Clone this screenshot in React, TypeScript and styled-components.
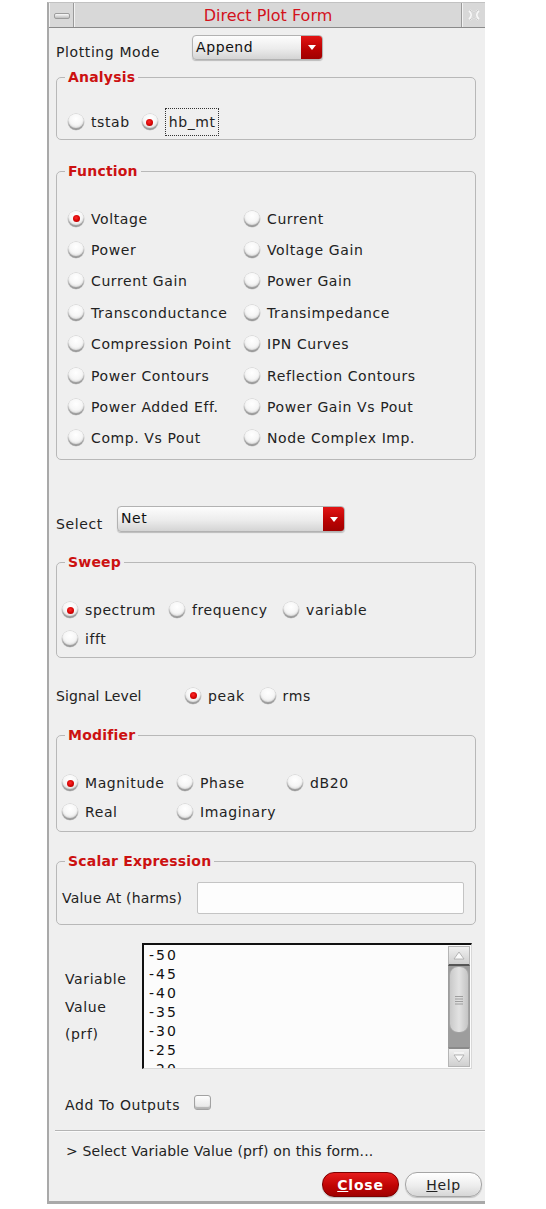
import React from 'react';
import styled, { createGlobalStyle } from 'styled-components';

const GlobalStyle = createGlobalStyle`
  html, body {
    margin: 0;
    padding: 0;
    background: #ffffff;
  }
  body {
    font-family: "DejaVu Sans", "Liberation Sans", sans-serif;
    font-size: 14px;
    color: #222;
    letter-spacing: 0.6px;
  }
`;

const Window = styled.div`
  box-sizing: border-box;
  width: 438px;
  margin: 2px 0 0 47px;
  background: #efefef;
  border-left: 2px solid #a9a9a9;
  border-bottom: 3px solid #a9a9a9;
  border-top: 1px solid #c2c2c2;
`;

const TitleBar = styled.div`
  display: flex;
  height: 25px;
  box-sizing: border-box;
  border-bottom: 1px solid #8a8a8a;
  background: #9a9a9a;
  gap: 1px;
`;

const TitleButton = styled.div<{ $w: number }>`
  width: ${(p) => p.$w}px;
  display: flex;
  align-items: center;
  justify-content: center;
  background: #d8d8d8;
  border-left: 1px solid #f2f2f2;
`;

const TitleText = styled.div`
  flex: 1;
  display: flex;
  align-items: center;
  justify-content: center;
  background: #d8d8d8;
  border-left: 1px solid #f2f2f2;
  color: #d3121c;
  font-size: 16px;
  letter-spacing: 0;
`;

const MinBar = styled.span`
  width: 14px;
  height: 4px;
  margin-top: 2px;
  border-radius: 2px;
  border: 1px solid #9c9c9c;
  background: linear-gradient(#fafafa, #bdbdbd);
`;

const Content = styled.div`
  padding: 0 9px 4px 7px;
`;

const FieldRow = styled.div<{ $mt: number }>`
  display: flex;
  align-items: flex-start;
  margin-top: ${(p) => p.$mt}px;
`;

const RowLabel = styled.div<{ $w: number; $pt: number; $ls?: number }>`
  width: ${(p) => p.$w}px;
  padding-top: ${(p) => p.$pt}px;
  line-height: 17px;
  flex-shrink: 0;
  letter-spacing: ${(p) => p.$ls ?? 0.6}px;
`;

const Combo = styled.div<{ $w: number; $h: number }>`
  box-sizing: border-box;
  width: ${(p) => p.$w}px;
  height: ${(p) => p.$h}px;
  display: flex;
  border: 1px solid #b2b2b2;
  border-radius: 4px;
  overflow: hidden;
  background: linear-gradient(#fdfdfd, #ececec 55%, #d4d4d4);
  box-shadow: 0 1px 1px rgba(0, 0, 0, 0.22);
`;

const ComboText = styled.span`
  flex: 1;
  padding: 0 0 2px 3px;
  display: flex;
  align-items: center;
  color: #111;
`;

const ComboArrow = styled.span`
  width: 21px;
  display: flex;
  align-items: center;
  justify-content: center;
  background: linear-gradient(#e21414, #b80202 60%, #a00000);
  &::after {
    content: '';
    border-left: 4px solid transparent;
    border-right: 4px solid transparent;
    border-top: 5px solid #fff;
  }
`;

const Group = styled.fieldset<{ $mt: number }>`
  margin: ${(p) => p.$mt}px 0 0;
  padding: 0;
  min-width: 0;
  border: 1px solid #b8b8b8;
  border-radius: 5px;
`;

const Legend = styled.legend`
  margin-left: 8px;
  padding: 0 3px;
  font-size: 14px;
  line-height: 17px;
  font-weight: bold;
  letter-spacing: 0.2px;
  color: #cc1111;
`;

const GroupBody = styled.div<{ $pt: number; $pb: number; $pl: number }>`
  padding: ${(p) => p.$pt}px 10px ${(p) => p.$pb}px ${(p) => p.$pl}px;
`;

const OptionGrid = styled.div<{ $cols: string; $row: number }>`
  display: grid;
  grid-template-columns: ${(p) => p.$cols};
  grid-auto-rows: ${(p) => p.$row}px;
  align-items: center;
`;

const OptionLine = styled.div`
  display: flex;
  align-items: center;
  height: 20px;
`;

const Option = styled.label<{ $mr?: number }>`
  display: flex;
  align-items: center;
  white-space: nowrap;
  margin-right: ${(p) => p.$mr ?? 0}px;
`;

const RadioDot = styled.span<{ $on?: boolean }>`
  box-sizing: border-box;
  width: 16px;
  height: 16px;
  margin-right: 7px;
  border-radius: 50%;
  flex-shrink: 0;
  display: flex;
  align-items: center;
  justify-content: center;
  background: radial-gradient(circle at 50% 30%, #ffffff 0%, #f6f6f6 45%, #dcdcdc 75%, #a8a8a8 100%);
  box-shadow: inset 0 -2px 1px rgba(70, 70, 70, 0.45), 0 0 0 0.5px #c8c8c8;
  &::after {
    content: '';
    display: ${(p) => (p.$on ? 'block' : 'none')};
    width: 7px;
    height: 7px;
    border-radius: 50%;
    background: radial-gradient(circle at 45% 40%, #ff2a2a, #d00000 60%, #8a0000);
  }
`;

const FocusBox = styled.span`
  border: 1px dotted #333;
  padding: 5px 2px 5px 3px;
`;

const TextInput = styled.div`
  box-sizing: border-box;
  flex: 1;
  height: 32px;
  background: #fdfdfd;
  border: 1px solid #c4c4c4;
  border-radius: 2px;
`;

const ScalarRow = styled.div`
  display: flex;
  align-items: center;
  padding: 12px 11px 10px 5px;
`;

const ScalarLabel = styled.div`
  width: 135px;
  letter-spacing: 0.2px;
`;

const ListArea = styled.div`
  display: flex;
  margin-top: 18px;
`;

const ListLabels = styled.div`
  width: 77px;
  padding: 23px 0 0 9px;
  line-height: 27.5px;
`;

const ListBox = styled.div`
  box-sizing: border-box;
  width: 330px;
  height: 126px;
  display: flex;
  background: #fcfcfc;
  border-top: 2px solid #111;
  border-left: 2px solid #111;
  border-right: 1px solid #d8d8d8;
  border-bottom: 1px solid #d8d8d8;
  overflow: hidden;
`;

const ListItems = styled.div`
  flex: 1;
  padding: 1px 0 0 5px;
  overflow: hidden;
`;

const ListItem = styled.div`
  height: 19px;
  line-height: 19px;
  letter-spacing: 2px;
  color: #111;
`;

const ScrollBar = styled.div`
  width: 22px;
  margin: 1px 1px 1px 0;
  display: flex;
  flex-direction: column;
  background: #9d9d9d;
`;

const ScrollArrow = styled.div<{ $down?: boolean }>`
  height: 20px;
  display: flex;
  flex-direction: column;
  align-items: center;
  justify-content: center;
  background: linear-gradient(#f0f0f0, #cfcfcf);
  border: 1px solid #b5b5b5;
  box-sizing: border-box;
  ${(p) => (p.$down ? 'border-top: 2px solid #8a8a8a;' : 'border-bottom: 2px solid #555;')}
`;

const ScrollThumb = styled.div`
  height: 67px;
  margin: 0 1px;
  border-radius: 9px;
  background: linear-gradient(90deg, #c9c9c9, #e2e2e2 50%, #c4c4c4);
  border: 1px solid #a4a4a4;
  box-sizing: border-box;
  display: flex;
  align-items: center;
  justify-content: center;
`;

const ScrollTrack = styled.div`
  flex: 1;
`;

const CheckRow = styled.div`
  display: flex;
  align-items: center;
  height: 20px;
  margin-top: 26px;
  padding-left: 9px;
`;

const CheckBox = styled.span`
  box-sizing: border-box;
  width: 17px;
  height: 15px;
  margin-left: 14px;
  margin-top: -6px;
  border-radius: 3px;
  border: 1px solid #a2a2a2;
  background: linear-gradient(#fdfdfd, #e4e4e4);
  box-shadow: inset 0 -2px 1px rgba(90, 90, 90, 0.35);
`;

const Separator = styled.div`
  margin: 15px -9px 0 -1px;
  height: 1px;
  background: #b4b4b4;
  border-bottom: 1px solid #fafafa;
`;

const Hint = styled.div`
  margin-top: 9px;
  padding-left: 10px;
  line-height: 20px;
  letter-spacing: 0.15px;
`;

const ButtonRow = styled.div`
  display: flex;
  justify-content: flex-end;
  gap: 6px;
  margin: 11px -6px 0 0;
`;

const PillButton = styled.div<{ $primary?: boolean }>`
  box-sizing: border-box;
  width: 77px;
  height: 25px;
  border-radius: 12px;
  display: flex;
  align-items: center;
  justify-content: center;
  font-size: 14px;
  font-weight: ${(p) => (p.$primary ? 'bold' : 'normal')};
  letter-spacing: ${(p) => (p.$primary ? '0.8px' : '0.6px')};
  color: ${(p) => (p.$primary ? '#ffffff' : '#222')};
  border: 1px solid ${(p) => (p.$primary ? '#7c0000' : '#a5a5a5')};
  background: ${(p) =>
    p.$primary
      ? 'linear-gradient(#e61c1c, #c00404 55%, #a00000)'
      : 'linear-gradient(#ffffff, #ededed 55%, #d6d6d6)'};
  box-shadow: 0 1px 1px rgba(0, 0, 0, 0.2);
`;

type Opt = { label: string; on?: boolean; focus?: boolean };

const Radio: React.FC<Opt & { mr?: number }> = ({ label, on, focus, mr }) => (
  <Option $mr={mr}>
    <RadioDot $on={on} />
    {focus ? <FocusBox>{label}</FocusBox> : label}
  </Option>
);

const functions: Opt[] = [
  { label: 'Voltage', on: true },
  { label: 'Current' },
  { label: 'Power' },
  { label: 'Voltage Gain' },
  { label: 'Current Gain' },
  { label: 'Power Gain' },
  { label: 'Transconductance' },
  { label: 'Transimpedance' },
  { label: 'Compression Point' },
  { label: 'IPN Curves' },
  { label: 'Power Contours' },
  { label: 'Reflection Contours' },
  { label: 'Power Added Eff.' },
  { label: 'Power Gain Vs Pout' },
  { label: 'Comp. Vs Pout' },
  { label: 'Node Complex Imp.' },
];

const sweeps: Opt[] = [
  { label: 'spectrum', on: true },
  { label: 'frequency' },
  { label: 'variable' },
  { label: 'ifft' },
];

const modifiers: Opt[] = [
  { label: 'Magnitude', on: true },
  { label: 'Phase' },
  { label: 'dB20' },
  { label: 'Real' },
  { label: 'Imaginary' },
];

const values = ['-50', '-45', '-40', '-35', '-30', '-25', '-20'];

const CloseGlyph = () => (
  <svg width="14" height="14" viewBox="0 0 14 14">
    <path d="M3 2 C6 5 8 5 11 2 M3 12 C6 9 8 9 11 12 M2 3 C5 6 5 8 2 11 M12 3 C9 6 9 8 12 11" fill="none" stroke="#f7f7f7" strokeWidth="1.6" />
    <path d="M3 2 C6 5 8 5 11 2 M3 12 C6 9 8 9 11 12" fill="none" stroke="#b9b9b9" strokeWidth="0.8" />
  </svg>
);

const UpArrow = () => (
  <svg width="12" height="9" viewBox="0 0 12 9">
    <path d="M6 1 L11 8 L1 8 Z" fill="#fbfbfb" stroke="#a8a8a8" strokeWidth="0.8" />
  </svg>
);

const DownArrow = () => (
  <svg width="12" height="11" viewBox="0 0 12 11">
    <path d="M1 1 L11 1" stroke="#fbfbfb" strokeWidth="1.2" />
    <path d="M1 3 L11 3 L6 10 Z" fill="#fbfbfb" stroke="#a8a8a8" strokeWidth="0.8" />
  </svg>
);

const Grip = () => (
  <svg width="8" height="10" viewBox="0 0 8 10">
    <path d="M0 1.5 H8 M0 4 H8 M0 6.5 H8 M0 9 H8" stroke="#8e8e8e" strokeWidth="0.8" />
  </svg>
);

export default function App() {
  return (
    <>
      <GlobalStyle />
      <Window>
        <TitleBar>
          <TitleButton $w={23}>
            <MinBar />
          </TitleButton>
          <TitleText>Direct Plot Form</TitleText>
          <TitleButton $w={22}>
            <CloseGlyph />
          </TitleButton>
        </TitleBar>

        <Content>
          <FieldRow $mt={7}>
            <RowLabel $w={136} $pt={9}>Plotting Mode</RowLabel>
            <Combo $w={131} $h={25}>
              <ComboText>Append</ComboText>
              <ComboArrow />
            </Combo>
          </FieldRow>

          <Group $mt={8}>
            <Legend>Analysis</Legend>
            <GroupBody $pt={26} $pb={7} $pl={11}>
              <OptionLine>
                <Radio label="tstab" mr={12} />
                <Radio label="hb_mt" on focus />
              </OptionLine>
            </GroupBody>
          </Group>

          <Group $mt={23}>
            <Legend>Function</Legend>
            <GroupBody $pt={23} $pb={5} $pl={11}>
              <OptionGrid $cols="176px 1fr" $row={31.4}>
                {functions.map((f) => (
                  <Radio key={f.label} {...f} />
                ))}
              </OptionGrid>
            </GroupBody>
          </Group>

          <FieldRow $mt={46}>
            <RowLabel $w={61} $pt={10}>Select</RowLabel>
            <Combo $w={228} $h={26}>
              <ComboText>Net</ComboText>
              <ComboArrow />
            </Combo>
          </FieldRow>

          <Group $mt={21}>
            <Legend>Sweep</Legend>
            <GroupBody $pt={25} $pb={4} $pl={5}>
              <OptionGrid $cols="107px 114px 1fr" $row={28.3}>
                {sweeps.map((s) => (
                  <Radio key={s.label} {...s} />
                ))}
              </OptionGrid>
            </GroupBody>
          </Group>

          <FieldRow $mt={30}>
            <RowLabel $w={129} $pt={0} $ls={0.1}>Signal Level</RowLabel>
            <Radio label="peak" on mr={15} />
            <Radio label="rms" />
          </FieldRow>

          <Group $mt={22}>
            <Legend>Modifier</Legend>
            <GroupBody $pt={25} $pb={5} $pl={5}>
              <OptionGrid $cols="115px 110px 1fr" $row={28.7}>
                {modifiers.map((m) => (
                  <Radio key={m.label} {...m} />
                ))}
              </OptionGrid>
            </GroupBody>
          </Group>

          <Group $mt={21}>
            <Legend>Scalar Expression</Legend>
            <ScalarRow>
              <ScalarLabel>Value At (harms)</ScalarLabel>
              <TextInput />
            </ScalarRow>
          </Group>

          <ListArea>
            <ListLabels>
              <div>Variable</div>
              <div>Value</div>
              <div>(prf)</div>
            </ListLabels>
            <ListBox>
              <ListItems>
                {values.map((v) => (
                  <ListItem key={v}>{v}</ListItem>
                ))}
              </ListItems>
              <ScrollBar>
                <ScrollArrow>
                  <UpArrow />
                </ScrollArrow>
                <ScrollThumb>
                  <Grip />
                </ScrollThumb>
                <ScrollTrack />
                <ScrollArrow $down>
                  <DownArrow />
                </ScrollArrow>
              </ScrollBar>
            </ListBox>
          </ListArea>

          <CheckRow>
            Add To Outputs
            <CheckBox />
          </CheckRow>

          <Separator />

          <Hint>&gt; Select Variable Value (prf) on this form...</Hint>

          <ButtonRow>
            <PillButton $primary>
              <u>C</u>lose
            </PillButton>
            <PillButton>
              <u>H</u>elp
            </PillButton>
          </ButtonRow>
        </Content>
      </Window>
    </>
  );
}
